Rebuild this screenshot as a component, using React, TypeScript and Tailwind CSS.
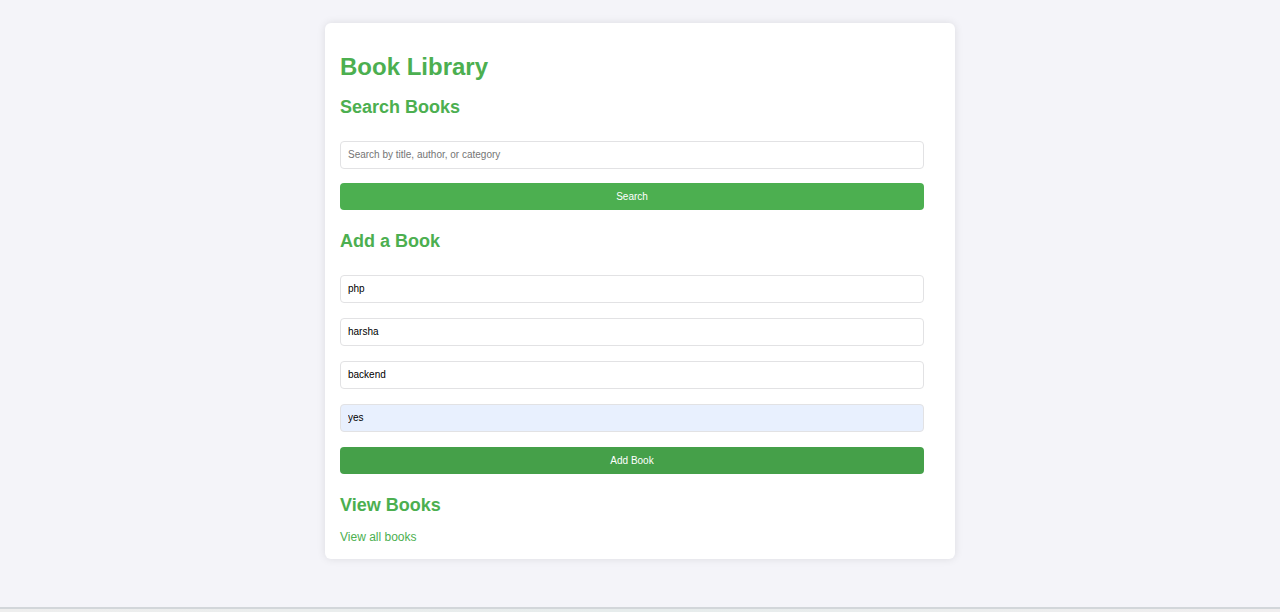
import type { ReactNode } from 'react';

const fieldBase =
  'block h-7 w-full rounded border border-[#e2e2e4] px-[7px] pb-0.5 text-[10px] text-black outline-none placeholder:text-[#757575]';

type FieldProps = {
  name: string;
  label: string;
  placeholder?: string;
  value?: string;
  autofilled?: boolean;
};

function Field({ name, label, placeholder, value, autofilled }: FieldProps) {
  return (
    <input
      type="text"
      name={name}
      aria-label={label}
      placeholder={placeholder}
      defaultValue={value}
      className={`${fieldBase} ${autofilled ? 'bg-[#e8f0fe]' : 'bg-white'}`}
    />
  );
}

function SectionTitle({ children }: { children: ReactNode }) {
  return <h2 className="text-[18px] leading-5 font-bold">{children}</h2>;
}

export default function App() {
  return (
    <div className="flex min-h-screen flex-col bg-[#f4f4f9] font-['Liberation_Sans',Arial,sans-serif]">
      <main className="mx-auto mt-[23px] mb-12 w-full max-w-[630px] rounded-md bg-white px-[15px] pt-[30px] pb-[15px] text-[#4caf50] shadow-[0_0_8px_rgba(0,0,0,0.1)]">
        <h1 className="mb-4 text-[24px] leading-7 font-bold">Book Library</h1>

        <section>
          <SectionTitle>Search Books</SectionTitle>
          <form
            className="mt-6 mr-4 mb-[21px] flex flex-col gap-[14px]"
            onSubmit={(event) => event.preventDefault()}
          >
            <Field name="query" label="Search books" placeholder="Search by title, author, or category" />
            <button type="submit" className="h-[27px] cursor-pointer rounded bg-[#4caf50] text-[10px] text-white">
              Search
            </button>
          </form>
        </section>

        <section>
          <SectionTitle>Add a Book</SectionTitle>
          <form
            className="mt-6 mr-4 mb-[21px] flex flex-col gap-[15px]"
            onSubmit={(event) => event.preventDefault()}
          >
            <Field name="title" label="Title" value="php" />
            <Field name="author" label="Author" value="harsha" />
            <Field name="category" label="Category" value="backend" />
            <Field name="available" label="Available" value="yes" autofilled />
            <button type="submit" className="h-[27px] cursor-pointer rounded bg-[#45a049] text-[10px] text-white">
              Add Book
            </button>
          </form>
        </section>

        <section>
          <SectionTitle>View Books</SectionTitle>
          <a href="#books" className="mt-[15px] block w-fit text-[12px] leading-[14px]">
            View all books
          </a>
        </section>
      </main>

      <footer className="mt-auto h-[5px] border-t-2 border-[#d2d6da] bg-linear-to-r from-[#eeeeee] via-[#e6ecec] to-[#f0eeef]" />
    </div>
  );
}
